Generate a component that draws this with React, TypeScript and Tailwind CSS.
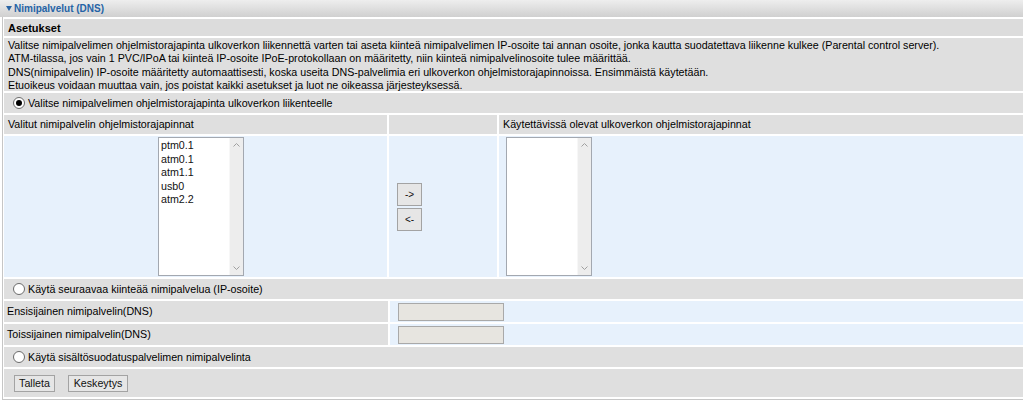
import React from 'react';

const FONT = { fontFamily: '"Liberation Sans", Arial, sans-serif' };

function Radio({ checked }: { checked?: boolean }) {
  return (
    <span className="relative w-[12px] h-[12px] rounded-full border border-[#6b6b6b] bg-white flex-shrink-0 flex items-center justify-center">
      {checked && <span className="w-[6px] h-[6px] rounded-full bg-black" />}
    </span>
  );
}

function ListBox({ items }: { items: string[] }) {
  return (
    <div className="w-[86px] h-[139px] border border-[#a3a8b0] bg-white flex">
      <div className="flex-1 pl-[2px] pt-[1px]">
        {items.map(it => (
          <div key={it} className="text-[10.7px] leading-[13.5px] text-[#111]">{it}</div>
        ))}
      </div>
      <div className="w-[14px] bg-[#ededed] border-l border-[#f7f7f7] flex flex-col items-center justify-between py-[5px]">
        <svg width="7" height="4" viewBox="0 0 7 4"><path d="M0.5 3.5 L3.5 0.5 L6.5 3.5" stroke="#a0a0a0" fill="none" /></svg>
        <svg width="7" height="4" viewBox="0 0 7 4"><path d="M0.5 0.5 L3.5 3.5 L6.5 0.5" stroke="#a0a0a0" fill="none" /></svg>
      </div>
    </div>
  );
}

const btn = 'h-[17px] border border-[#a3a3a3] bg-[#e6e6e6] text-[10.7px] leading-[15px] text-[#111] flex items-center justify-center';

export default function App() {
  return (
    <div className="w-[1023px] h-[403px] bg-white overflow-hidden text-[10.7px] text-black" style={FONT}>
      {/* title bar */}
      <div className="h-[17px] bg-gradient-to-b from-[#eeeeee] to-[#d0d0d0] flex items-center pl-[6px] gap-[2px]">
        <svg width="6" height="5" viewBox="0 0 6 5"><polygon points="0,0 6,0 3,5" fill="#2a64a4" /></svg>
        <span className="text-[10px] font-bold text-[#2563a6]">Nimipalvelut (DNS)</span>
      </div>

      <div className="ml-[2px] border-l border-b border-[#c6c6c6] pl-[1px] pt-[2px] pb-[2px] flex flex-col gap-[2px]">
        <div className="h-[17px] bg-[#dcdcdc] flex items-center pl-[4px] pt-[1px] font-bold text-[11px]">Asetukset</div>

        <div className="h-[53px] bg-[#dfdfdf] pl-[4px] pt-[1px] leading-[13.4px]">
          <div>Valitse nimipalvelimen ohjelmistorajapinta ulkoverkon liikennettä varten tai aseta kiinteä nimipalvelimen IP-osoite tai annan osoite, jonka kautta suodatettava liikenne kulkee (Parental control server).</div>
          <div>ATM-tilassa, jos vain 1 PVC/IPoA tai kiinteä IP-osoite IPoE-protokollaan on määritetty, niin kiinteä nimipalvelinosoite tulee määrittää.</div>
          <div>DNS(nimipalvelin) IP-osoite määritetty automaattisesti, koska useita DNS-palvelimia eri ulkoverkon ohjelmistorajapinnoissa. Ensimmäistä käytetään.</div>
          <div>Etuoikeus voidaan muuttaa vain, jos poistat kaikki asetukset ja luot ne oikeassa järjesteyksessä.</div>
        </div>

        <div className="h-[20px] bg-[#dfdfdf] flex items-center pl-[9px] gap-[3px]">
          <Radio checked />
          <span>Valitse nimipalvelimen ohjelmistorajapinta ulkoverkon liikenteelle</span>
        </div>

        <div className="h-[19px] flex gap-[2px]">
          <div className="w-[383px] bg-[#dfdfdf] flex items-center pl-[4px]">Valitut nimipalvelin ohjelmistorajapinnat</div>
          <div className="w-[108px] bg-[#dfdfdf]" />
          <div className="flex-1 bg-[#dfdfdf] flex items-center pl-[4px]">Käytettävissä olevat ulkoverkon ohjelmistorajapinnat</div>
        </div>

        <div className="h-[141px] flex gap-[2px]">
          <div className="w-[383px] bg-[#e7f1fc] pl-[154px] pt-[1px]">
            <ListBox items={['ptm0.1', 'atm0.1', 'atm1.1', 'usb0', 'atm2.2']} />
          </div>
          <div className="w-[108px] bg-[#e7f1fc] flex flex-col justify-center gap-[2px] pl-[8px]">
            <div className={btn + ' w-[25px] h-[23px] text-[10px]'}>-&gt;</div>
            <div className={btn + ' w-[25px] h-[23px] text-[10px]'}>&lt;-</div>
          </div>
          <div className="flex-1 bg-[#e7f1fc] pl-[7px] pt-[1px]">
            <ListBox items={[]} />
          </div>
        </div>

        <div className="h-[20px] bg-[#dfdfdf] flex items-center pl-[9px] gap-[3px]">
          <Radio />
          <span>Käytä seuraavaa kiinteää nimipalvelua (IP-osoite)</span>
        </div>

        {['Ensisijainen nimipalvelin(DNS)', 'Toissijainen nimipalvelin(DNS)'].map(l => (
          <div key={l} className="h-[21px] flex gap-[2px]">
            <div className="w-[384px] bg-[#dfdfdf] flex items-center pl-[3px]">{l}</div>
            <div className="flex-1 bg-[#e7f1fc] flex items-center pl-[8px]">
              <div className="w-[106px] h-[18px] border border-[#a9a9a9] bg-[#e7e5e0]" />
            </div>
          </div>
        ))}

        <div className="h-[20px] bg-[#dfdfdf] flex items-center pl-[9px] gap-[3px]">
          <Radio />
          <span>Käytä sisältösuodatuspalvelimen nimipalvelinta</span>
        </div>

        <div className="h-[28px] bg-[#dfdfdf] flex items-center pl-[10px] gap-[13px]">
          <div className={btn + ' w-[41px]'}>Talleta</div>
          <div className={btn + ' w-[60px]'}>Keskeytys</div>
        </div>
      </div>
    </div>
  );
}
